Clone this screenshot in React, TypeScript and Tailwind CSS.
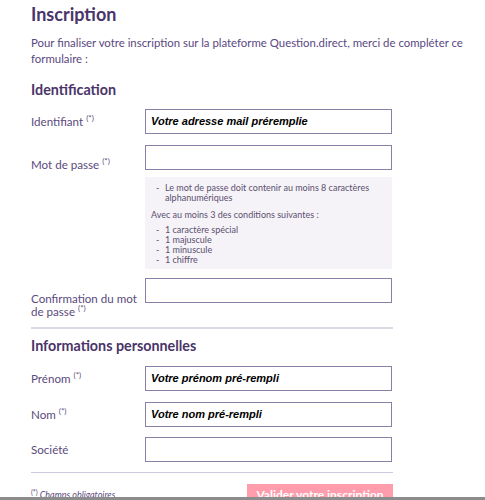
import React from "react";

const ff = { fontFamily: "Lato, 'Noto Sans', sans-serif" };

function Req() {
  return <span className="inline-block text-[8px] leading-none ml-[3px] relative top-[-5px]">(*)</span>;
}

function Input({ value }: { value?: string }) {
  return (
    <div className="w-[247px] h-[25px] shrink-0 border border-[#8c7fa6] bg-white flex items-center px-[5px]">
      {value && (
        <span className="text-[11px] font-bold italic text-black" style={{ fontFamily: "'Liberation Sans', Arial, sans-serif" }}>
          {value}
        </span>
      )}
    </div>
  );
}

function Dash({ children }: { children: React.ReactNode }) {
  return (
    <div className="flex">
      <span className="w-[9px] shrink-0">-</span>
      <span>{children}</span>
    </div>
  );
}

export default function App() {
  return (
    <div className="relative w-[485px] h-[500px] overflow-hidden bg-white text-[#5b4a7d]" style={ff}>
      <div className="pl-[31px] w-[393px]">
        <h1 className="text-[18px] font-bold text-[#4a3469] leading-[24px] pt-[2px]">Inscription</h1>
        <p className="mt-[9px] text-[11.4px] leading-[16px] w-[448px] text-[#5a4880]">
          Pour finaliser votre inscription sur la plateforme Question.direct, merci de compléter ce formulaire :
        </p>
        <h2 className="mt-[13px] text-[14.3px] font-bold text-[#4a3469] leading-[20px]">Identification</h2>

        <div className="mt-[9px] flex items-center h-[25px]">
          <div className="w-[114px] text-[11.6px] leading-[14px]">Identifiant<Req /></div>
          <Input value="Votre adresse mail préremplie" />
        </div>

        <div className="mt-[11px] flex items-start">
          <div className="w-[114px] text-[11.6px] leading-[14px] pt-[13px]">Mot de passe<Req /></div>
          <Input />
        </div>

        <div className="flex mt-[5px]">
          <div className="w-[114px] shrink-0" />
          <div className="w-[247px] h-[92px] bg-[#f5f3f8] text-[9px] leading-[10px] text-[#5b4f6e] pl-[6px] pt-[6px]">
            <div className="pl-[5px]">
              <Dash>Le mot de passe doit contenir au moins 8 caractères<br />alphanumériques</Dash>
            </div>
            <div className="mt-[7px]">Avec au moins 3 des conditions suivantes :</div>
            <div className="mt-[5px] pl-[5px]">
              <Dash>1 caractère spécial</Dash>
              <Dash>1 majuscule</Dash>
              <Dash>1 minuscule</Dash>
              <Dash>1 chiffre</Dash>
            </div>
          </div>
        </div>

        <div className="mt-[9px] flex items-start">
          <div className="w-[114px] shrink-0 text-[11.6px] leading-[13px] pt-[14px]">
            Confirmation du mot<br />de passe<Req />
          </div>
          <Input />
        </div>

        <div className="mt-[9px] h-[2px] bg-[#ddd7e6]" />

        <h2 className="mt-[7px] text-[14.3px] font-bold text-[#4a3469] leading-[20px]">Informations personnelles</h2>

        <div className="mt-[10px] flex items-center h-[25px]">
          <div className="w-[114px] text-[11.6px] leading-[14px]">Prénom<Req /></div>
          <Input value="Votre prénom pré-rempli" />
        </div>
        <div className="mt-[11px] flex items-center h-[25px]">
          <div className="w-[114px] text-[11.6px] leading-[14px]">Nom<Req /></div>
          <Input value="Votre nom pré-rempli" />
        </div>
        <div className="mt-[10px] flex items-center h-[25px]">
          <div className="w-[114px] text-[11.6px] leading-[14px]">Société</div>
          <Input />
        </div>

        <div className="mt-[10px] h-[1px] bg-[#cfc7dc]" />

        <div className="mt-[11px] flex justify-between items-start">
          <div className="text-[9px] italic leading-[10px] pt-[6px]">
            <span className="inline-block not-italic text-[7px] leading-none relative top-[-3px] mr-[2px]">(*)</span>
            Champs obligatoires
          </div>
          <button className="w-[146px] h-[22px] bg-[#ff9dad] text-white font-bold text-[12px] leading-[22px]">
            Valider votre inscription
          </button>
        </div>
      </div>
      <div className="absolute left-0 right-0 bottom-0 h-[3px] bg-[#8c8c8c]" />
    </div>
  );
}
